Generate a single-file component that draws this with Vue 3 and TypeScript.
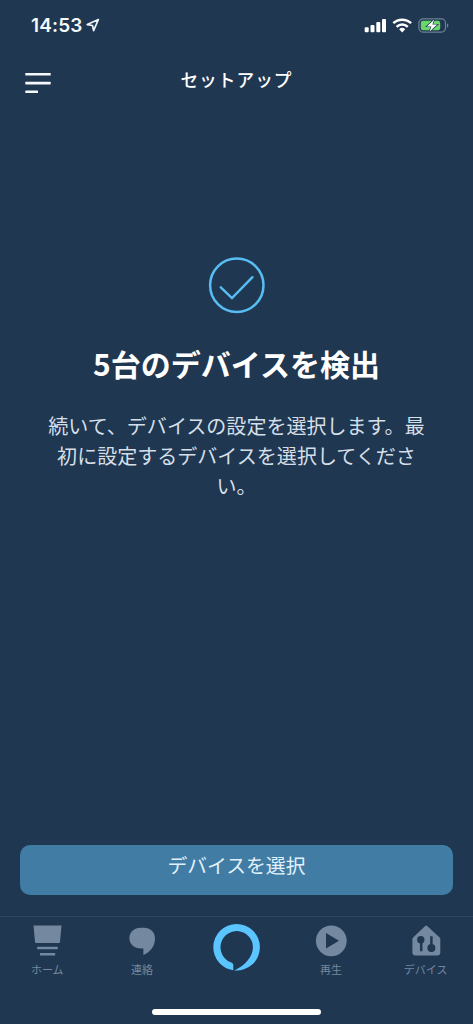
<script setup lang="ts">
const lines: string[] = [
  '続いて、デバイスの設定を選択します。最',
  '初に設定するデバイスを選択してくださ',
  'い。',
]
</script>

<template>
  <div class="screen">
    <header class="status">
      <div class="clock">
        <span class="time">14:53</span>
        <svg class="arrow" width="14" height="14" viewBox="0 0 14 14">
          <path d="M12.4 1.5 1.2 6.6 6.5 7.5 7.6 12.6Z" fill="none" stroke="#edf4f9" stroke-width="1.7" stroke-linejoin="round" />
        </svg>
      </div>
      <svg class="indicators" width="84" height="18" viewBox="0 0 84 18">
        <g fill="#fff">
          <rect x="0.7" y="10.3" width="4" height="5" rx="1" />
          <rect x="6.5" y="7.9" width="4" height="7.4" rx="1" />
          <rect x="12.3" y="5" width="4" height="10.3" rx="1" />
          <rect x="18" y="2" width="4" height="13.3" rx="1" />
        </g>
        <g fill="none" stroke="#fff" stroke-width="2.5">
          <path d="M29.3 6.2a13 13 0 0 1 17.8 0" />
          <path d="M32.6 9.8a8.1 8.1 0 0 1 11.2 0" />
        </g>
        <path d="M35.2 12.3a4.3 4.3 0 0 1 6 0l-3 3.1z" fill="#fff" />
        <rect x="54.9" y="1.9" width="26.6" height="13.2" rx="4" fill="none" stroke="#6d8292" stroke-width="1.2" />
        <rect x="56.8" y="3.8" width="19.4" height="9.4" rx="2.2" fill="#69d66c" />
        <path d="M83 6.3v4.5q1.4-.6 1.4-2.2T83 6.3Z" fill="#6d8292" />
        <path d="M70.2 2.4 62.9 9.4h4.5L65.4 14.8 73.2 7.6h-4.8Z" fill="#fff" stroke="#1f3751" stroke-width="1.4" paint-order="stroke" />
      </svg>
    </header>

    <nav class="topbar">
      <svg class="menu" width="26" height="22" viewBox="0 0 26 22">
        <g fill="#f5f9fc">
          <rect x="0.3" y="0.9" width="25.4" height="2.6" rx=".5" />
          <rect x="0.3" y="9.8" width="25.4" height="2.6" rx=".5" />
          <rect x="0.3" y="18.5" width="12.7" height="2.6" rx=".5" />
        </g>
      </svg>
      <h1>セットアップ</h1>
    </nav>

    <main>
      <svg class="check" width="58" height="58" viewBox="0 0 58 58">
        <g fill="none" stroke="#57bdf2">
          <circle cx="28.8" cy="29.2" r="26.7" stroke-width="2.5" />
          <path d="M12.8 31.3 24 42 44.5 21.2" stroke-width="2.4" stroke-linecap="round" />
        </g>
      </svg>
      <h2>5台のデバイスを検出</h2>
      <p><span v-for="line in lines" :key="line">{{ line }}</span></p>
    </main>

    <button class="primary" type="button">デバイスを選択</button>

    <footer class="tabs">
      <a class="tab">
        <svg width="34" height="34" viewBox="0 0 34 34" fill="#74899f">
          <path d="M3.5 2.5h28L30 19q-.1 1-1 1H6q-.9 0-1-1Z" />
          <rect x="7.2" y="23.8" width="20.6" height="2.4" rx=".5" />
          <rect x="10" y="30" width="15.2" height="2.4" rx=".5" />
        </svg>
        <span>ホーム</span>
      </a>
      <a class="tab">
        <svg width="34" height="34" viewBox="0 0 34 34" fill="#74899f">
          <path d="M15.8 4.8h3C25.4 4.8 30 9 30 15.4c0 7.6-4.4 13.2-11.6 16.6v-6.6h-2.2C9 25.4 4.4 21.2 4.4 15.2S9 4.8 15.8 4.8Z" />
        </svg>
        <span>連絡</span>
      </a>
      <a class="tab voice">
        <svg width="48" height="48" viewBox="-1 0 48 48">
          <path fill="#5bc5ff" d="M20.3 47.3A23.3 23.3 0 0 1 .3 24.2 23.3 23.3 0 0 1 23.6 .9 23.3 23.3 0 0 1 46.9 24.2 23.3 23.3 0 0 1 21.3 47.4C32.6 42.5 39.9 33 39.9 24.5A16.2 16.2 0 1 0 17.6 39.2C19.6 40 20.3 40.6 20.3 42Z" />
        </svg>
      </a>
      <a class="tab">
        <svg width="34" height="34" viewBox="0 0 34 34">
          <circle cx="17.3" cy="17.8" r="15.4" fill="#74899f" />
          <path d="M12 10v15.4l13-7.7Z" fill="#1f3751" />
        </svg>
        <span>再生</span>
      </a>
      <a class="tab">
        <svg width="34" height="34" viewBox="0 0 34 34">
          <path d="M16.2 3q1-.8 2 0L30.6 14.4q.7.7.7 1.6v13.5q0 3-3 3H6.4q-3 0-3-3V16q0-.9.7-1.6Z" fill="#74899f" />
          <g fill="#1f3751" stroke="#1f3751">
            <circle cx="11.8" cy="16.7" r="3.7" stroke="none" />
            <path d="M12.2 17v11.3M22.4 13.2V25" stroke-width="2.5" />
            <circle cx="22.4" cy="25" r="4" stroke="none" />
          </g>
        </svg>
        <span>デバイス</span>
      </a>
    </footer>
    <div class="home-indicator"></div>
  </div>
</template>

<style>
body {
  margin: 0;
  background: #1f3751;
}
</style>

<style scoped>
.screen {
  box-sizing: border-box;
  width: 473px;
  height: 1024px;
  display: flex;
  flex-direction: column;
  overflow: hidden;
  background: #1f3751;
  color: #fff;
  font-family: "Noto Sans CJK JP", sans-serif;
}
.status {
  height: 52px;
  flex: none;
  display: flex;
  justify-content: space-between;
  box-sizing: border-box;
  padding: 14px 25px 0 31px;
}
.clock {
  display: flex;
  align-items: flex-start;
}
.time {
  font: 600 19px/24px Inter, sans-serif;
  letter-spacing: 0.15px;
  color: #f3f8fb;
}
.arrow {
  margin: 4px 0 0 3px;
}
.indicators {
  margin-top: 3px;
  overflow: visible;
}
.topbar {
  height: 66px;
  flex: none;
  display: grid;
  grid-template-columns: 26px 1fr 26px;
  padding: 0 25px;
}
.menu {
  margin-top: 20px;
}
h1 {
  margin: 14px 0 0;
  text-align: center;
  font-size: 17.7px;
  line-height: 26px;
  font-weight: 500;
  letter-spacing: 1px;
}
main {
  flex: 1;
  display: flex;
  flex-direction: column;
  align-items: center;
  padding-top: 138px;
}
.check {
  display: block;
}
h2 {
  margin: 28px 0 0;
  font-size: 30px;
  line-height: 42px;
  font-weight: 700;
  white-space: nowrap;
}
p {
  margin: 27px 0 0;
  display: flex;
  flex-direction: column;
  align-items: center;
  font-size: 20.05px;
  line-height: 30px;
  color: #d5dfe7;
  white-space: nowrap;
}
.primary {
  flex: none;
  height: 50px;
  margin: 0 20px 21px;
  padding: 0 0 10px;
  border: 0;
  border-radius: 10px;
  background: #407ca4;
  color: #e1f1fb;
  font: 400 19.8px/30px "Noto Sans CJK JP", sans-serif;
}
.tabs {
  flex: none;
  height: 92px;
  box-sizing: border-box;
  border-top: 1px solid #30475d;
  display: grid;
  grid-template-columns: repeat(5, 1fr);
}
.tab {
  display: flex;
  flex-direction: column;
  align-items: center;
  padding-top: 6px;
  font-size: 11px;
  line-height: 16px;
  color: #74899f;
  white-space: nowrap;
}
.tab span {
  margin-top: 4px;
}
.home-indicator {
  flex: none;
  width: 169px;
  height: 6px;
  margin: 1px auto 9px;
  border-radius: 3px;
  background: #fff;
}
</style>
